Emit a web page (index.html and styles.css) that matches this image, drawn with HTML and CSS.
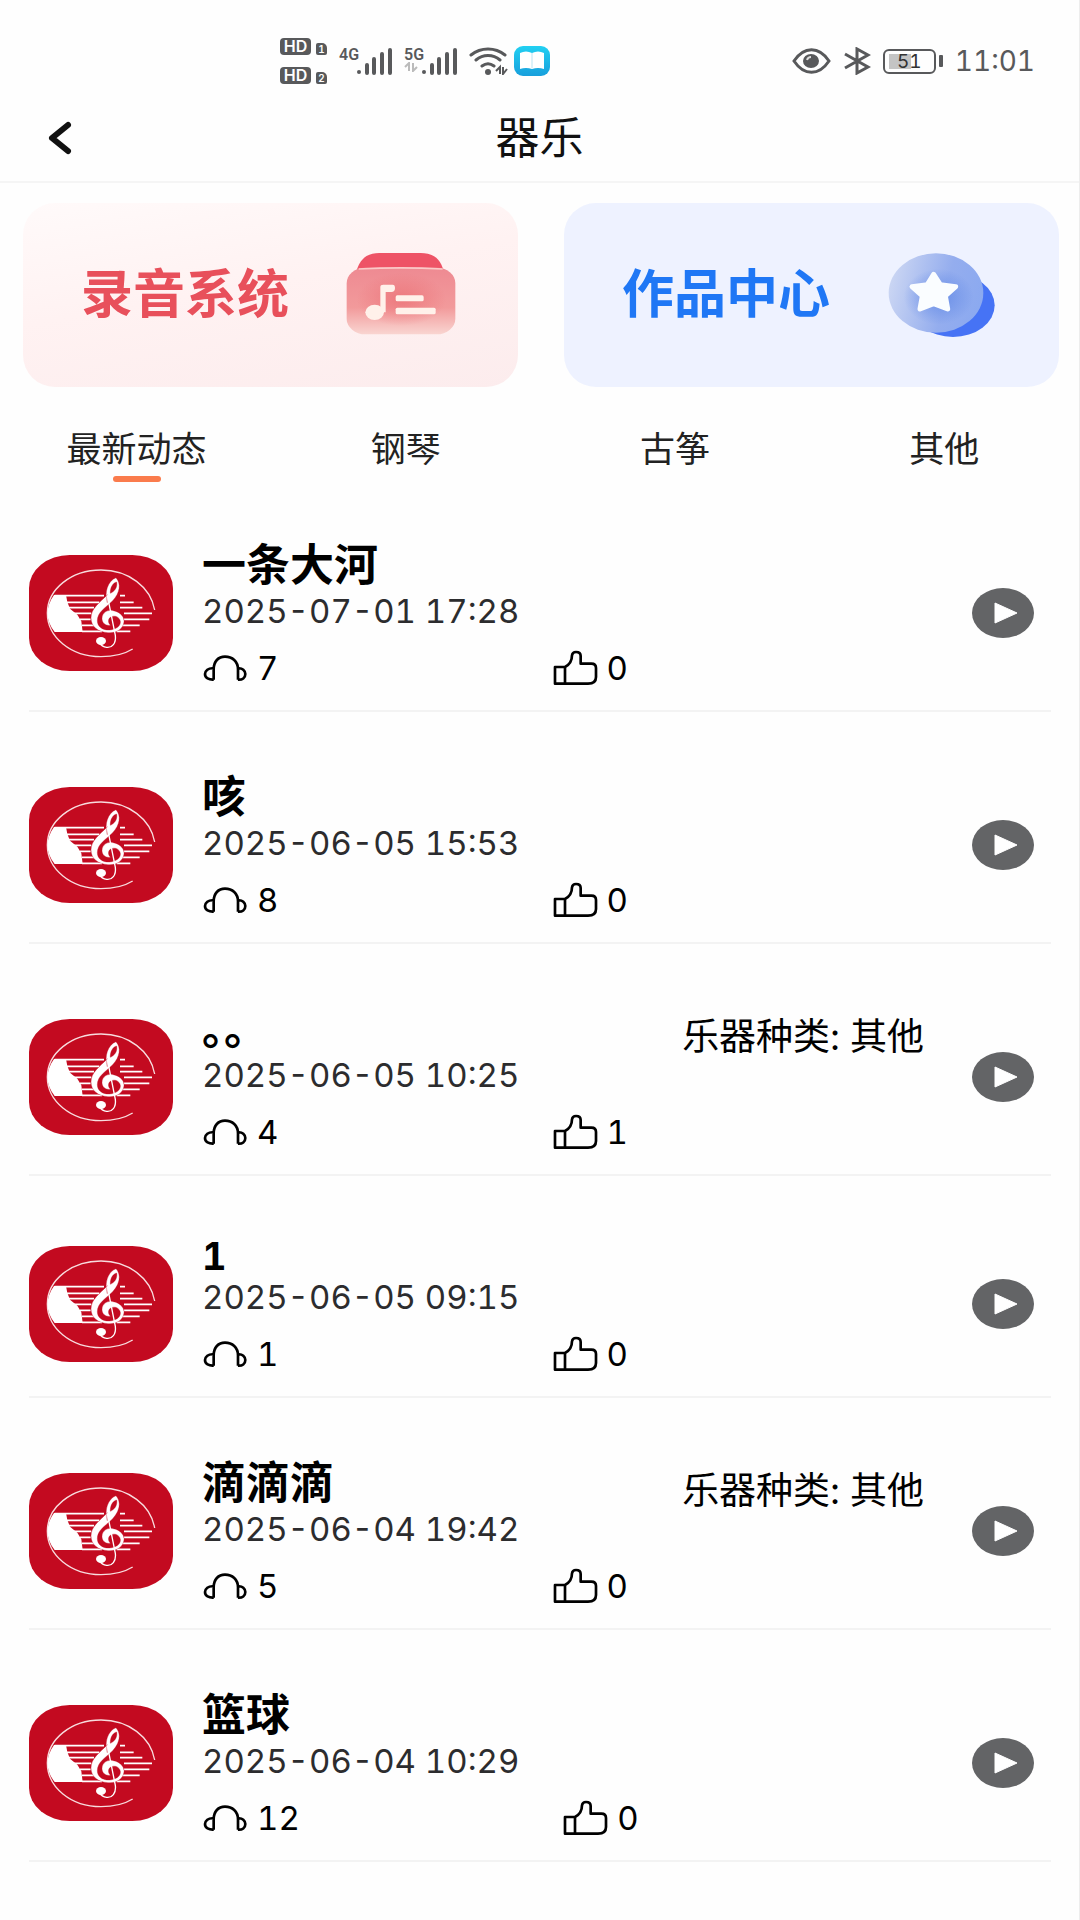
FILE: index.html
```html
<!DOCTYPE html>
<html lang="zh-CN">
<head>
<meta charset="utf-8">
<meta name="viewport" content="width=device-width, initial-scale=1">
<title>器乐</title>
<link rel="stylesheet" href="styles.css">
</head>
<body>
<svg class="sprite" aria-hidden="true">
  <symbol id="i-logo" viewBox="27 39 432 348">
    <rect x="27" y="39" width="432" height="348" rx="122" ry="100" fill="#c30a20"/>
    <g fill="none" stroke="#fff">
      <path d="M404 204C392 135 325 84 243 84C153 84 82 142 82 213C82 286 153 344 243 344C280 344 312 337 338 321" stroke="#f8dcde" stroke-width="4"/>
      <path d="M104 161H252M300 161H315M140 181H238M300 181H341M146 197H222M300 197H367M160 214H214M312 214H396M180 232H212M312 232H388M186 250H222M306 250H359M186 268H246M290 268H331" stroke-width="5"/>
    </g>
    <path d="M102 159H138L142 180L150 200L172 218L184 238L188 270H104C76 235 76 195 102 159Z" fill="#fff"/>
    <path d="M262 182C252 150 264 116 288 107C304 125 300 152 278 176C256 198 232 210 232 236C232 254 248 265 268 264C288 263 303 252 301 238C299 224 282 218 271 226C263 232 264 244 272 250C256 252 246 242 246 230C246 212 262 202 280 206C302 210 314 226 312 240C309 262 288 274 264 272C234 270 213 254 213 228C213 198 240 182 262 158ZM271 154C284 148 293 136 290 120C278 122 270 138 271 154Z" fill="#fff" stroke="#c30a20" stroke-width="1"/>
    <path d="M262 160L286 280C289 304 276 318 260 316C250 315 242 309 238 302" fill="none" stroke="#fff" stroke-width="4"/>
    <ellipse cx="243" cy="297" rx="15" ry="12" fill="#fff"/>
  </symbol>
  <symbol id="i-phones" viewBox="39 365 138 90">
    <path d="M74 445V414C74 390 88 376 108 376C130 376 147 390 147 414V445M74 411C58 409 48 419 48 428C48 440 60 446 74 445M147 411C160 409 169 419 169 428C169 440 160 446 147 445" fill="none" stroke="#000" stroke-width="8"/>
  </symbol>
  <symbol id="i-like" viewBox="1085 359 135 108">
    <path d="M1091 410H1121V460H1091ZM1121 410C1137 402 1142 389 1142 375C1143 367 1148 365 1154 365C1163 365 1168 369 1168 377V400H1200C1210 400 1214 405 1214 413V440C1214 453 1205 460 1190 460H1121" fill="none" stroke="#000" stroke-width="8" stroke-linejoin="round"/>
  </symbol>
  <symbol id="i-play" viewBox="0 0 62 50">
    <ellipse cx="31" cy="25" rx="31" ry="25" fill="#636466"/>
    <path d="M23 15L45 25L23 35Z" fill="#fff" stroke="#fff" stroke-linejoin="round"/>
  </symbol>
  <symbol id="i-bars" viewBox="0 0 36 28">
    <path d="M10 26V18M17 26V12M25 26V7M33 26V3" fill="none" stroke="#58595b" stroke-width="4" stroke-linecap="round"/>
    <circle cx="2" cy="25" r="2" fill="#58595b"/>
  </symbol>
</svg>

<div class="page">
  <div class="status">
    <div class="status-left">
      <div class="hd-stack">
        <div class="hd"><span class="hd-tag">HD</span><span class="sim">1</span></div>
        <div class="hd"><span class="hd-tag">HD</span><span class="sim">2</span></div>
      </div>
      <div class="signal"><span class="net">4G</span><svg class="bars"><use href="#i-bars"/></svg></div>
      <div class="signal"><span class="net">5G<svg class="updown" viewBox="0 0 14 10"><path d="M1 5L5 1V9M9 1V9L13 5" fill="none" stroke="#bbb" stroke-width="2"/></svg></span><svg class="bars"><use href="#i-bars"/></svg></div>
      <svg class="wifi" viewBox="0 0 40 28" aria-hidden="true">
        <g fill="none" stroke="#58595b" stroke-width="3" stroke-linecap="round"><path d="M2 8C12 0 26 0 36 8M7 13C14 7 24 7 31 13M13 19C17 16 21 16 25 19"/></g>
        <circle cx="19" cy="25" r="3" fill="#58595b"/>
        <path d="M27 24L31 20V27M34 20V27L38 22" fill="none" stroke="#58595b" stroke-width="2"/>
      </svg>
      <svg class="book" viewBox="0 0 36 30" aria-hidden="true">
        <defs><linearGradient id="g-book" x1="0" y1="0" x2="0" y2="1"><stop offset="0" stop-color="#22d0f2"/><stop offset="1" stop-color="#189fdc"/></linearGradient></defs>
        <rect width="36" height="30" rx="9" fill="url(#g-book)"/>
        <path d="M6 7Q12 4 18 7Q24 4 30 7V23Q24 21 18 23Q12 21 6 23Z" fill="#fff"/><path d="M18 7V22" stroke="#b9e4f3"/>
      </svg>
    </div>
    <div class="status-right">
      <svg class="eye" viewBox="0 0 39 26" aria-hidden="true">
        <path d="M2 13C12-2 27-2 37 13C27 28 12 28 2 13Z" fill="none" stroke="#58595b" stroke-width="3"/>
        <ellipse cx="19" cy="13" rx="8" ry="7" fill="#58595b"/><path d="M15 12Q16 9 19 9" fill="none" stroke="#ddd" stroke-width="2"/>
      </svg>
      <svg class="bluetooth" viewBox="0 0 28 28" aria-hidden="true"><path d="M2 7L25 20L14 26V2L25 8L2 21" fill="none" stroke="#58595b" stroke-width="3"/></svg>
      <div class="battery"><span class="battery-body">51</span><span class="battery-tip"></span></div>
      <time class="clock">11:01</time>
    </div>
  </div>

  <header class="header">
    <button class="back" type="button" aria-label="返回">
      <svg viewBox="0 0 24 34"><path d="M20 4L4 17L20 30" fill="none" stroke="#111" stroke-width="6" stroke-linecap="round" stroke-linejoin="round"/></svg>
    </button>
    <h1 class="title">器乐</h1>
  </header>

  <nav class="cards">
    <a class="card card-record" href="#record">
      <span>录音系统</span>
      <svg class="card-icon" viewBox="80 66 330 252" aria-hidden="true">
        <defs>
          <linearGradient id="g-rec" x1="0" y1="0" x2="0" y2="1"><stop offset="0" stop-color="#ee8a92"/><stop offset=".6" stop-color="#f29a9b"/><stop offset="1" stop-color="#f9d5d1"/></linearGradient>
          <radialGradient id="g-glow"><stop offset="0" stop-color="#ec7277" stop-opacity=".8"/><stop offset="1" stop-color="#ec7277" stop-opacity="0"/></radialGradient>
        </defs>
        <path d="M112 118C124 80 146 66 180 66H304C342 66 364 84 372 118Z" fill="#ee5366"/>
        <rect x="82" y="110" width="326" height="200" rx="56" ry="46" fill="url(#g-rec)"/>
        <ellipse cx="246" cy="205" rx="135" ry="80" fill="url(#g-glow)"/>
        <path d="M118 114Q245 107 370 114" fill="none" stroke="#fbc9c7" stroke-width="5"/>
        <g fill="#fff1ea"><ellipse cx="166" cy="244" rx="28" ry="23"/><path d="M183 168Q183 161 192 161H220Q227 161 227 171Q227 183 216 183H199V244H183Z"/><rect x="229" y="193" width="84" height="18" rx="5"/><rect x="229" y="230" width="120" height="20" rx="5"/></g>
      </svg>
    </a>
    <a class="card card-works" href="#works">
      <span>作品中心</span>
      <svg class="card-icon" viewBox="50 54 330 252" aria-hidden="true">
        <defs>
          <linearGradient id="g-work" x1="0" y1=".4" x2="1" y2=".6"><stop offset="0" stop-color="#cbd6f3"/><stop offset=".6" stop-color="#94adee"/><stop offset="1" stop-color="#8ba9f0"/></linearGradient>
          <radialGradient id="g-blue"><stop offset="0" stop-color="#5d86e6" stop-opacity=".8"/><stop offset="1" stop-color="#5d86e6" stop-opacity="0"/></radialGradient>
        </defs>
        <ellipse cx="248" cy="211" rx="125" ry="95" fill="#4673f5"/>
        <ellipse cx="197" cy="174" rx="142" ry="119" fill="url(#g-work)"/>
        <ellipse cx="205" cy="185" rx="105" ry="84" fill="url(#g-blue)"/>
        <path d="M190 118L210 149L256 155L225 183L232 222L190 206L149 222L156 183L125 155L171 149Z" fill="#fafdff" stroke="#fafdff" stroke-width="15" stroke-linejoin="round"/>
      </svg>
    </a>
  </nav>

  <nav class="tabs">
    <button class="tab tab-active" type="button">最新动态</button>
    <button class="tab" type="button">钢琴</button>
    <button class="tab" type="button">古筝</button>
    <button class="tab" type="button">其他</button>
  </nav>

  <ul class="list">
    <li class="item">
      <svg class="logo"><use href="#i-logo"/></svg>
      <div class="body">
        <div class="top"><h2 class="name">一条大河</h2></div>
        <time class="date">2025-07-01 17:28</time>
        <div class="stats"><span class="stat"><svg class="phones"><use href="#i-phones"/></svg>7</span><button class="stat" type="button"><svg class="like"><use href="#i-like"/></svg>0</button></div>
      </div>
      <button class="play" type="button" aria-label="播放"><svg><use href="#i-play"/></svg></button>
    </li>
    <li class="item">
      <svg class="logo"><use href="#i-logo"/></svg>
      <div class="body">
        <div class="top"><h2 class="name">咳</h2></div>
        <time class="date">2025-06-05 15:53</time>
        <div class="stats"><span class="stat"><svg class="phones"><use href="#i-phones"/></svg>8</span><button class="stat" type="button"><svg class="like"><use href="#i-like"/></svg>0</button></div>
      </div>
      <button class="play" type="button" aria-label="播放"><svg><use href="#i-play"/></svg></button>
    </li>
    <li class="item">
      <svg class="logo"><use href="#i-logo"/></svg>
      <div class="body">
        <div class="top"><h2 class="name">。。</h2><span class="kind">乐器种类: 其他</span></div>
        <time class="date">2025-06-05 10:25</time>
        <div class="stats"><span class="stat"><svg class="phones"><use href="#i-phones"/></svg>4</span><button class="stat" type="button"><svg class="like"><use href="#i-like"/></svg>1</button></div>
      </div>
      <button class="play" type="button" aria-label="播放"><svg><use href="#i-play"/></svg></button>
    </li>
    <li class="item">
      <svg class="logo"><use href="#i-logo"/></svg>
      <div class="body">
        <div class="top"><h2 class="name name-latin">1</h2></div>
        <time class="date">2025-06-05 09:15</time>
        <div class="stats"><span class="stat"><svg class="phones"><use href="#i-phones"/></svg>1</span><button class="stat" type="button"><svg class="like"><use href="#i-like"/></svg>0</button></div>
      </div>
      <button class="play" type="button" aria-label="播放"><svg><use href="#i-play"/></svg></button>
    </li>
    <li class="item">
      <svg class="logo"><use href="#i-logo"/></svg>
      <div class="body">
        <div class="top"><h2 class="name">滴滴滴</h2><span class="kind">乐器种类: 其他</span></div>
        <time class="date">2025-06-04 19:42</time>
        <div class="stats"><span class="stat"><svg class="phones"><use href="#i-phones"/></svg>5</span><button class="stat" type="button"><svg class="like"><use href="#i-like"/></svg>0</button></div>
      </div>
      <button class="play" type="button" aria-label="播放"><svg><use href="#i-play"/></svg></button>
    </li>
    <li class="item">
      <svg class="logo"><use href="#i-logo"/></svg>
      <div class="body">
        <div class="top"><h2 class="name">篮球</h2></div>
        <time class="date">2025-06-04 10:29</time>
        <div class="stats"><span class="stat"><svg class="phones"><use href="#i-phones"/></svg>12</span><button class="stat" type="button"><svg class="like"><use href="#i-like"/></svg>0</button></div>
      </div>
      <button class="play" type="button" aria-label="播放"><svg><use href="#i-play"/></svg></button>
    </li>
  </ul>
</div>
</body>
</html>
```
FILE: styles.css
```css
* { box-sizing: border-box; }
body {
  margin: 0;
  background: #fefefe;
  color: #000;
  font-family: Inter, "Noto Sans CJK SC", sans-serif;
  font-variant-numeric: tabular-nums;
}
button {
  margin: 0;
  padding: 0;
  border: 0;
  background: none;
  color: inherit;
  font: inherit;
  font-variant-numeric: inherit;
  cursor: pointer;
}
svg { display: block; flex: none; }
.sprite { position: absolute; width: 0; height: 0; }
.page { min-height: 100vh; border-right: 1px solid #ededed; }

/* status bar */
.status {
  display: flex;
  justify-content: space-between;
  align-items: center;
  height: 96px;
  padding: 26px 44px 0 280px;
  color: #58595b;
}
.status-left, .status-right { display: flex; align-items: center; }
.hd-stack { display: grid; gap: 12px; margin-right: 12px; }
.hd { display: flex; align-items: flex-end; gap: 5px; }
.hd-tag {
  width: 31px;
  height: 17px;
  border-radius: 4px;
  background: #58595b;
  color: #fff;
  font-size: 16px;
  font-weight: 600;
  line-height: 17px;
  text-align: center;
}
.sim {
  width: 11px;
  height: 12px;
  border-radius: 2px 5px 2px 2px;
  background: #58595b;
  color: #fff;
  font-size: 10px;
  font-weight: 600;
  line-height: 12px;
  text-align: center;
}
.signal { display: flex; margin-right: 11px; }
.net {
  width: 18px;
  height: 28px;
  font-family: Roboto, sans-serif;
  font-size: 16px;
  font-weight: 600;
  line-height: 15px;
}
.updown { width: 14px; height: 10px; }
.bars { width: 36px; height: 28px; }
.wifi { width: 40px; height: 28px; margin-right: 5px; }
.book { width: 36px; height: 30px; }
.eye { width: 39px; height: 26px; margin-right: 12px; }
.bluetooth { width: 28px; height: 28px; margin-right: 12px; }
.battery { display: flex; align-items: center; gap: 3px; margin-right: 12px; }
.battery-body {
  width: 53px;
  height: 25px;
  border: 2px solid #58595b;
  border-radius: 6px;
  background: linear-gradient(90deg, #c4c4c4 50%, transparent 50%) 4px 3px / 44px 15px no-repeat;
  color: #333;
  font-size: 19px;
  line-height: 21px;
  text-align: center;
}
.battery-tip { width: 4px; height: 12px; background: #58595b; border-radius: 1px; }
.clock { font-size: 28px; line-height: 32px; }

/* title bar */
.header {
  display: grid;
  grid-template-columns: 72px 1fr 72px;
  align-items: center;
  height: 87px;
  padding-bottom: 2px;
  border-bottom: 2px solid #f5f5f5;
}
.back { justify-self: end; }
.back svg { width: 24px; height: 34px; }
.title {
  margin: 0;
  color: #111;
  font-size: 44px;
  font-weight: 400;
  line-height: 52px;
  text-align: center;
}

/* entry cards */
.cards {
  display: grid;
  grid-template-columns: 1fr 1fr;
  gap: 46px;
  padding: 20px 20px 0 23px;
}
.card {
  display: flex;
  align-items: center;
  justify-content: space-between;
  height: 184px;
  padding: 0 62px 0 58px;
  border-radius: 32px;
  font-size: 52px;
  font-weight: 700;
  line-height: 64px;
  text-decoration: none;
}
.card-record { background: linear-gradient(170deg, #fffafa, #fff2f2 45%, #fceced); color: #e8505b; }
.card-works { background: #eef2ff; color: #1f77f5; }
.card-icon { width: 110px; height: 84px; }

/* tabs */
.tabs { display: grid; grid-template-columns: repeat(4, 1fr); padding: 36px 0 0 2px; }
.tab {
  display: flex;
  flex-direction: column;
  align-items: center;
  height: 57px;
  color: #222;
  font-size: 35px;
  line-height: 53px;
}
.tab-active::after {
  flex: none;
  width: 48px;
  height: 6px;
  border-radius: 3px;
  background: #fa7b4c;
  content: "";
}

/* recordings */
.list { margin: 0; padding: 0 28px 0 29px; list-style: none; }
.item {
  display: flex;
  align-items: center;
  padding: 62px 17px 26px 0;
  border-bottom: 2px solid #f3f3f3;
}
.logo { width: 144px; height: 116px; margin-right: 29px; }
.body { flex: 1; min-width: 0; }
.top {
  display: flex;
  justify-content: space-between;
  align-items: flex-end;
}
.name {
  margin: 0 0 6px;
  font-size: 44px;
  font-weight: 700;
  line-height: 46px;
  font-feature-settings: "halt";
}
.name-latin { font-size: 38px; line-height: 36px; }
.kind { font-size: 37px; line-height: 42px; }
.date { display: block; color: #2c2c2e; font-size: 33px; line-height: 34px; }
.stats { display: flex; margin-top: 24px; padding-right: 22px; }
.stat {
  display: flex;
  flex: 1 1 auto;
  align-items: center;
  gap: 9px;
  height: 32px;
  font-size: 33px;
  line-height: 32px;
}
.phones { width: 46px; height: 30px; }
.like { width: 45px; height: 36px; }
.play { margin-left: 48px; }
.play svg { width: 62px; height: 50px; }
```
